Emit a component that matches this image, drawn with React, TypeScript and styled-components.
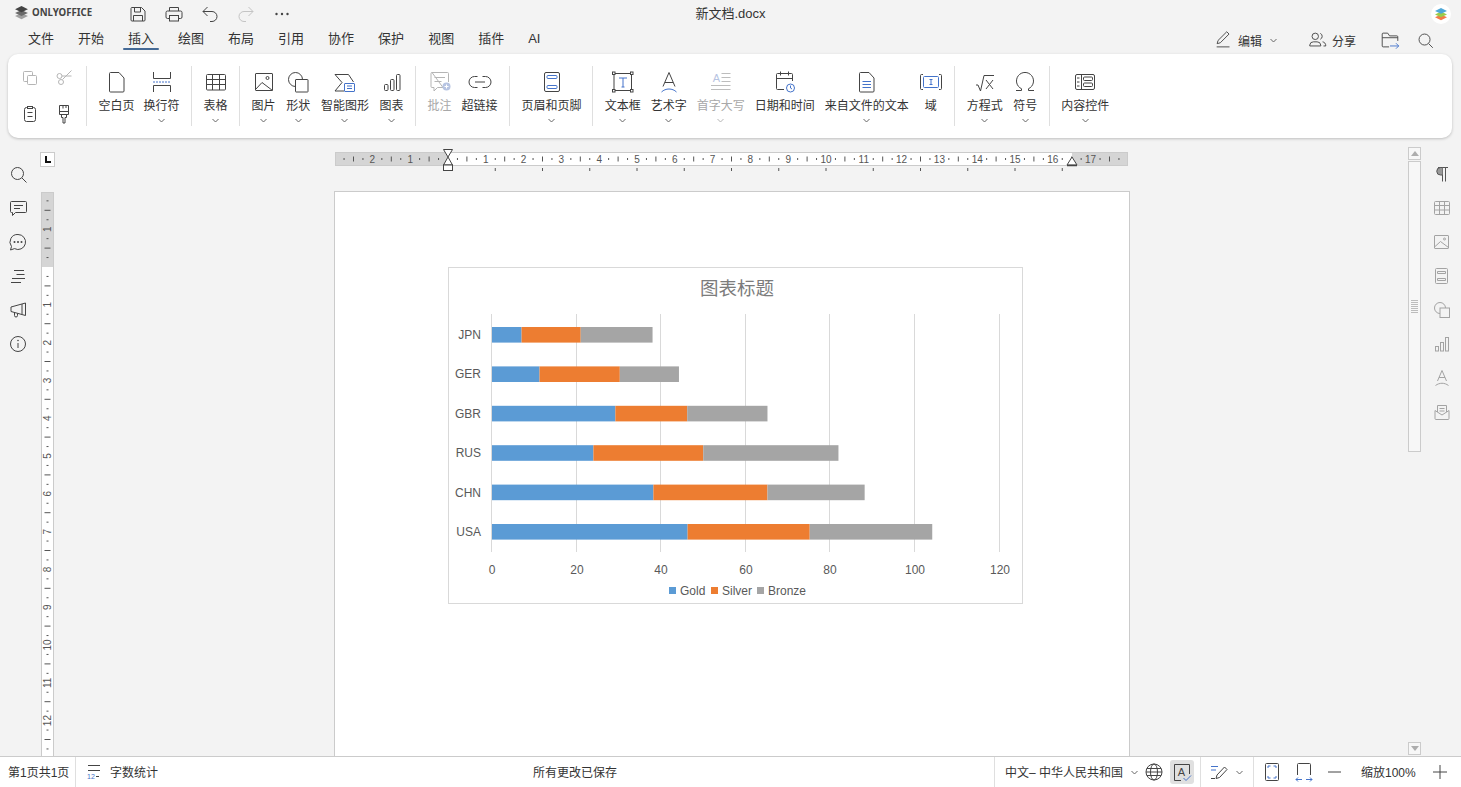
import * as React from "react"
import styled, { createGlobalStyle } from "styled-components"

const COLOR = {
  bg: "#f3f3f3",
  ink: "#444444",
  text: "#333333",
  muted: "#a8a8a8",
  accent: "#4473ca",
  line: "#cbcbcb",
  soft: "#dfdfdf",
}

const GlobalStyle = createGlobalStyle`
  html, body, #root {
    margin: 0;
    height: 100%;
  }
  body {
    background: ${COLOR.bg};
    color: ${COLOR.text};
    font-family: "Liberation Sans", "Noto Sans CJK SC", sans-serif;
    overflow: hidden;
  }
`

const Shell = styled.div`
  display: flex;
  flex-direction: column;
  width: 100%;
  height: 100vh;
  overflow: hidden;
`

/* ---------- icons ---------- */

const Svg = styled.svg<{ $tone?: string }>`
  display: block;
  flex: none;
  fill: none;
  stroke: ${p => p.$tone || COLOR.ink};
  stroke-width: 1;
  color: ${p => p.$tone || COLOR.ink};
`

const Blue: React.FC<{ children: React.ReactNode }> = ({ children }) => <g stroke={COLOR.accent}>{children}</g>

const IconText: React.FC<{ x: number; y: number; size: number; fill?: string; children: React.ReactNode }> = ({
  x,
  y,
  size,
  fill,
  children,
}) => (
  <text
    x={x}
    y={y}
    fontSize={size}
    fontFamily="'Liberation Sans', sans-serif"
    textAnchor="middle"
    fill={fill || "currentColor"}
    stroke="none"
  >
    {children}
  </text>
)

const GLYPHS: Record<string, React.ReactNode> = {
  save: (
    <>
      <path d="M5.5 5.5h10l3.5 3.5v9a1 1 0 0 1-1 1h-12a1 1 0 0 1-1-1v-11.5a1 1 0 0 1 .5-1z" />
      <path d="M8.5 5.5V10h6V5.5M7.5 19v-5.5h9V19" />
    </>
  ),
  print: (
    <>
      <path d="M7.5 9V5.5h9V9" />
      <path d="M7.5 16.5h-2A1.5 1.5 0 0 1 4 15v-4.5A1.5 1.5 0 0 1 5.5 9h13a1.5 1.5 0 0 1 1.5 1.5V15a1.5 1.5 0 0 1-1.5 1.5h-2" />
      <rect x="7.5" y="13.5" width="9" height="5.5" />
    </>
  ),
  undo: <path d="M9.5 5L5 9.5 9.5 14M5 9.5h9a5 5 0 0 1 0 10h-2" />,
  redo: <path d="M14.5 5L19 9.5 14.5 14M19 9.5h-9a5 5 0 0 0 0 10h2" />,
  more: (
    <g fill="currentColor" stroke="none">
      <circle cx="6.5" cy="12" r="1.2" />
      <circle cx="12" cy="12" r="1.2" />
      <circle cx="17.5" cy="12" r="1.2" />
    </g>
  ),
  copy: (
    <>
      <path d="M9 15.5H6.5a1 1 0 0 1-1-1v-8a1 1 0 0 1 1-1h7a1 1 0 0 1 1 1V9" />
      <rect x="9.5" y="9.5" width="9" height="9" rx="1" />
    </>
  ),
  cut: (
    <>
      <circle cx="7.5" cy="10" r="2.5" />
      <circle cx="9" cy="16" r="2.5" />
      <path d="M10.5 13.5L19.5 4.5M10 10h9.5" />
    </>
  ),
  paste: (
    <>
      <rect x="6.5" y="5.5" width="11" height="14" rx="2" />
      <rect x="9.5" y="4.5" width="5" height="2" fill="#fff" />
      <path d="M9.5 10.5h5M9.5 14.5h5" />
    </>
  ),
  brush: (
    <>
      <path d="M7.5 3.5h9v9h-9zM11 3.5v3M14 3.5V6M7.5 9.5h9" />
      <path d="M9.5 12.5v3H11V21h2v-5.5h1.5v-3" />
    </>
  ),
  page: <path d="M4.5 3.5a1 1 0 0 1 1-1H14l5 5.5v13a1 1 0 0 1-1 1H5.5a1 1 0 0 1-1-1z" />,
  breaks: (
    <>
      <path d="M3.5 2v6.5h17V2M3.5 22v-6.5h17V22" />
      <Blue>
        <path d="M3 12h18" strokeDasharray="2 1" />
      </Blue>
    </>
  ),
  table: (
    <>
      <rect x="2.5" y="4.5" width="19" height="15.5" rx="1" />
      <path d="M2.5 9.5h19M2.5 14.5h19M8.5 4.5V20M15.5 4.5V20" />
    </>
  ),
  image: (
    <>
      <rect x="3.5" y="3.5" width="17" height="17" rx=".5" />
      <path d="M3.5 19.5l6.5-7 10.5 8" />
      <circle cx="15.5" cy="8" r="1.5" />
    </>
  ),
  shape: (
    <>
      <circle cx="9.5" cy="9.5" r="7" />
      <rect x="9.5" y="9.5" width="12.5" height="12.5" rx=".5" fill="#fff" />
    </>
  ),
  smart: (
    <>
      <path d="M2 4.5h13.5l5 7.5M2 4.5l7 8-7 8.5h9" />
      <Blue>
        <rect x="11.5" y="13.5" width="10" height="8" rx=".5" fill="#fff" />
        <path d="M14 16h5M14 18.5h5" />
      </Blue>
    </>
  ),
  chart: (
    <>
      <rect x="4.5" y="14.5" width="3.5" height="6" rx="1" />
      <rect x="10.5" y="9.5" width="3.5" height="11" rx="1" />
      <rect x="16.5" y="4.5" width="3.5" height="16" rx="1" />
    </>
  ),
  comment: (
    <>
      <path d="M4 2.5h15.5a1 1 0 0 1 1 1V12M15 17.5H9.5L6 21v-3.5H4a1 1 0 0 1-1-1v-13a1 1 0 0 1 1-1z" />
      <path d="M6.5 7.5H17M6.5 11.5h7" />
      <circle cx="18.5" cy="16.5" r="4" fill="#b7c4e2" stroke="none" />
      <path d="M16.5 16.5h4M18.5 14.5v4" stroke="#fff" />
    </>
  ),
  link: <path d="M9.5 6.5h-3a5.5 5.5 0 0 0 0 11h3M14.5 6.5h3a5.5 5.5 0 0 1 0 11h-3M7 12h10" />,
  header: (
    <>
      <rect x="4.5" y="2.5" width="15" height="19" rx="1.5" />
      <Blue>
        <rect x="7" y="5.5" width="10" height="3" rx="1" />
        <rect x="7" y="15.5" width="10" height="3" rx="1" />
      </Blue>
    </>
  ),
  textbox: (
    <>
      <rect x="3" y="3.5" width="17.5" height="17" />
      <g fill="#fff">
        <rect x="1.5" y="2" width="2.5" height="2.5" />
        <rect x="19.5" y="2" width="2.5" height="2.5" />
        <rect x="1.5" y="19.5" width="2.5" height="2.5" />
        <rect x="19.5" y="19.5" width="2.5" height="2.5" />
      </g>
      <Blue>
        <path d="M8 8h8M12 8v9M10.5 17h3" />
      </Blue>
    </>
  ),
  art: (
    <>
      <path d="M6 16.5L12 2.5l6 14M8 12.5h8" />
      <Blue>
        <path d="M4.5 22c4-4 11-4 15 0" />
      </Blue>
    </>
  ),
  dropcap: (
    <>
      <IconText x={7.5} y={11.5} size={11} fill="#b7c4e2">
        A
      </IconText>
      <path d="M12.5 3.5h9M12.5 7.5h9M12.5 11.5h9M2 15.5h19.5M2 19.5h19.5" stroke="#bdbdbd" />
    </>
  ),
  date: (
    <>
      <path d="M11 19.5H4.5a1 1 0 0 1-1-1v-14a1 1 0 0 1 1-1h14a1 1 0 0 1 1 1V11M3.5 8.5h16M7.5 1.5v4M15.5 1.5v4" />
      <Blue>
        <circle cx="17.5" cy="18" r="4" fill="#fff" />
        <path d="M17.5 15.5V18l1.5 1" />
      </Blue>
    </>
  ),
  fromfile: (
    <>
      <path d="M4.5 3.5a1 1 0 0 1 1-1H14l5 5.5v13a1 1 0 0 1-1 1H5.5a1 1 0 0 1-1-1z" />
      <Blue>
        <path d="M7.5 11.5H16M7.5 14.5H16M7.5 17.5H16" />
      </Blue>
    </>
  ),
  field: (
    <>
      <path d="M4 4.5H2.5a1 1 0 0 0-1 1v13a1 1 0 0 0 1 1H4M20 4.5h1.5a1 1 0 0 1 1 1v13a1 1 0 0 1-1 1H20" />
      <Blue>
        <rect x="4.5" y="6.5" width="15" height="11" rx="1" />
        <path d="M10.5 9.5h3M12 9.5v5M10.5 14.5h3" />
      </Blue>
    </>
  ),
  formula: <path d="M3 15h2l2.5 6L11 5.5h10M13 10l7 9M20 10l-7 9" />,
  symbol: <path d="M3 20.5h5.5v-1.8A8.5 8.5 0 1 1 15.5 18.7v1.8H21" />,
  control: (
    <>
      <rect x="2.5" y="4.5" width="19" height="15" rx="1.5" />
      <path d="M8.5 4.5v15M4 8h2.5M4 12h2.5M4 16h2.5" />
      <rect x="10.5" y="7" width="9" height="3.5" rx="1" />
      <rect x="10.5" y="13" width="9" height="3.5" rx="1" />
    </>
  ),
  pencil: (
    <>
      <path d="M4.5 16l1-3.5L15 3l2.5 2.5L8 15z" />
      <path d="M4 19.5h14" />
    </>
  ),
  users: (
    <>
      <circle cx="9" cy="8" r="3.5" />
      <path d="M3 18.5v-1A4 4 0 0 1 7 14h4a4 4 0 0 1 4 3.5v1zM14.5 4.8a3.5 3.5 0 0 1 0 6.4M17 14c2 .3 3.5 1.8 3.5 4.5H18" />
    </>
  ),
  folder: (
    <>
      <path d="M11 19.5H4.5a1 1 0 0 1-1-1v-13a1 1 0 0 1 1-1h5l2 3h8a1 1 0 0 1 1 1V13M3.5 9.5h17" />
      <Blue>
        <path d="M12 18.5h9.5M18.5 15.5l3 3-3 3" />
      </Blue>
    </>
  ),
  search: (
    <>
      <circle cx="11.5" cy="11.5" r="6" />
      <path d="M16 16l4.5 4.5" />
    </>
  ),
  bubble: (
    <>
      <path d="M5.5 5.5h14a1 1 0 0 1 1 1v9a1 1 0 0 1-1 1h-10l-3 3v-3h-1a1 1 0 0 1-1-1v-9a1 1 0 0 1 1-1z" />
      <path d="M8 9.5h9M8 12.5h6" />
    </>
  ),
  chat: (
    <>
      <path d="M12 4.5a7.5 7.5 0 1 1-3.5 14.1L4.5 20l1-3.5A7.5 7.5 0 0 1 12 4.5z" />
      <g fill="currentColor" stroke="none">
        <circle cx="8.5" cy="12" r="1" />
        <circle cx="12" cy="12" r="1" />
        <circle cx="15.5" cy="12" r="1" />
      </g>
    </>
  ),
  headings: <path d="M8 6.5h10M10.5 10.5h8M6 14.5h13M5 18.5h10" />,
  megaphone: (
    <>
      <path d="M19.5 5v12.5L5 13.5V9zM16 6v10.5" />
      <path d="M8.5 14.5v3a1.5 1.5 0 0 0 3 0v-2" />
    </>
  ),
  info: (
    <>
      <circle cx="12" cy="12" r="7.5" />
      <path d="M12 11v5" />
      <circle cx="12" cy="8.5" r=".8" fill="currentColor" stroke="none" />
    </>
  ),
  pilcrow: (
    <>
      <path d="M8 5.5h10M12.5 5.5v14M15.5 5.5v14" />
      <path d="M12.5 5.5h-2a3.75 3.75 0 0 0 0 7.5h2" fill="#999" />
    </>
  ),
  railTable: (
    <>
      <rect x="4.5" y="5.5" width="15" height="13" rx="1" />
      <path d="M4.5 9.5h15M4.5 14h15M9.5 5.5v13M14.5 5.5v13" />
    </>
  ),
  railImage: (
    <>
      <rect x="4.5" y="5.5" width="14" height="13" rx=".5" />
      <path d="M4.5 17l6-5.5 8 6" />
      <circle cx="14.5" cy="9" r="1" />
    </>
  ),
  railHeader: (
    <>
      <rect x="5.5" y="4.5" width="12" height="15" rx="1" />
      <path d="M7.5 7.5h8v2h-8zM7.5 14.5h8v2h-8z" />
    </>
  ),
  railShape: (
    <>
      <circle cx="10" cy="10" r="5.5" />
      <rect x="10" y="10" width="9.5" height="9.5" fill="#f3f3f3" />
    </>
  ),
  railChart: (
    <>
      <rect x="5.5" y="14.5" width="3" height="4.5" />
      <rect x="10.5" y="10.5" width="3" height="8.5" />
      <rect x="15.5" y="5.5" width="3" height="13.5" />
    </>
  ),
  railArt: (
    <>
      <path d="M7.5 15L12 4.5 16.5 15M9 11.5h6" />
      <path d="M5.5 19.5c4-3 9-3 13 0" />
    </>
  ),
  railMail: (
    <>
      <path d="M5 10.5v8a1 1 0 0 0 1 1h12a1 1 0 0 0 1-1v-8L12 15z" />
      <path d="M7.5 12V5.5h9V12M9.5 8.5h5M9.5 11h5" />
    </>
  ),
  wordcount: (
    <>
      <path d="M6 5.5h12M6 10.5h12" />
      <IconText x={9} y={19} size={7} fill={COLOR.accent}>
        12
      </IconText>
      <path d="M14 16.5h3" />
    </>
  ),
  globe: (
    <>
      <circle cx="12" cy="12" r="8" />
      <ellipse cx="12" cy="12" rx="3.5" ry="8" />
      <path d="M4 12h16M5 8.5h14M5 15.5h14" />
    </>
  ),
  spell: (
    <>
      <path d="M11 20.5H4.5v-16h15V14" />
      <IconText x={11.5} y={16} size={11}>
        A
      </IconText>
      <Blue>
        <path d="M13.5 18l2.5 2.5 5-5" />
      </Blue>
    </>
  ),
  track: (
    <>
      <Blue>
        <path d="M4 6.5h7M4 10h5" />
      </Blue>
      <path d="M9 18.5l1-3.5 7.5-8 2.5 2.5-7.5 8zM4 18.5h4" />
    </>
  ),
  fitPage: (
    <>
      <rect x="5.5" y="3.5" width="13" height="17" rx="1" />
      <Blue>
        <path d="M8 8V6h2.5M13.5 6H16v2M8 16v2h2.5M13.5 18H16v-2" />
      </Blue>
    </>
  ),
  fitWidth: (
    <>
      <path d="M5.5 15V4.5a1 1 0 0 1 1-1h11a1 1 0 0 1 1 1V15" />
      <Blue>
        <path d="M4 19.5h6M14 19.5h6M6 17.5l-2 2 2 2M18 17.5l2 2-2 2" />
      </Blue>
    </>
  ),
  minus: <path d="M5 12h13" />,
  plus: <path d="M5 12h14M12 5v14" />,
}

const Glyph: React.FC<{ name: string; tone?: string; size?: number }> = ({ name, tone, size = 24 }) => (
  <Svg $tone={tone} width={size} height={size} viewBox="0 0 24 24">
    {GLYPHS[name]}
  </Svg>
)

const Chevron: React.FC<{ tone?: string }> = ({ tone }) => (
  <Svg $tone={tone || "#666"} width={7} height={5} viewBox="0 0 7 5">
    <path d="M.5 1L3.5 4 6.5 1" />
  </Svg>
)

/* ---------- title bar ---------- */

const TitleBar = styled.header`
  display: grid;
  grid-template-columns: 1fr auto 1fr;
  align-items: center;
  height: 26px;
  flex: none;
`

const TitleLeft = styled.div`
  display: flex;
  align-items: center;
  padding-left: 14px;
`

const LogoMark = styled.div`
  display: flex;
  align-items: center;
  gap: 3px;
  width: 106px;
  padding-bottom: 3px;
  font-family: "Noto Sans", "Liberation Sans", sans-serif;
  font-size: 9.7px;
  font-weight: 700;
  color: ${COLOR.ink};
`

const QuickButton = styled.div`
  display: flex;
  justify-content: center;
  width: 36px;
`

const DocTitle = styled.div`
  padding-top: 1px;
  font-size: 13px;
  line-height: 26px;
  color: ${COLOR.text};
`

const TitleRight = styled.div`
  display: flex;
  justify-content: flex-end;
  padding-right: 10px;
`

const AppBadge = styled.div`
  display: flex;
  align-items: center;
  justify-content: center;
  width: 20px;
  height: 20px;
  border-radius: 50%;
  background: #fff;
`

/* ---------- tabs ---------- */

const TabRow = styled.nav`
  display: flex;
  align-items: center;
  height: 26px;
  flex: none;
  padding: 0 25px 0 16px;
`

const Tab = styled.div<{ $active?: boolean }>`
  position: relative;
  padding: 0 12px;
  font-size: 13px;
  line-height: 26px;
  color: ${COLOR.text};

  &::after {
    content: "";
    display: ${p => (p.$active ? "block" : "none")};
    position: absolute;
    left: 7px;
    right: 7px;
    bottom: 2px;
    height: 2.5px;
    border-radius: 1px;
    background: #446995;
  }
`

const TabActions = styled.div`
  display: flex;
  align-items: center;
  margin-left: auto;
  padding-top: 2px;
`

const ActionButton = styled.div<{ $gap?: number }>`
  display: flex;
  align-items: center;
  gap: 3px;
  margin-left: ${p => p.$gap || 0}px;
  font-size: 12px;
  color: ${COLOR.text};
`

const ActionLabel = styled.span`
  margin-right: 5.5px;
`

/* ---------- ribbon ---------- */

const Ribbon = styled.section`
  display: flex;
  align-items: flex-start;
  flex: none;
  height: 84px;
  box-sizing: border-box;
  margin: 2px 9px 0 8px;
  padding: 12px 0 0 5px;
  border-radius: 10px;
  background: #fff;
  box-shadow: 0 1px 3px rgba(0, 0, 0, 0.22);
`

const ClipboardGrid = styled.div`
  display: grid;
  grid-template-columns: 34px 34px;
  grid-auto-rows: 24px;
  row-gap: 12px;
  justify-items: center;
  margin-right: -6.5px;
`

const Divider = styled.div`
  flex: none;
  width: 1px;
  height: 60px;
  margin: 0 11.5px;
  background: ${COLOR.soft};
`

const Group = styled.div<{ $gap: number; $trim?: number }>`
  display: flex;
  gap: ${p => p.$gap}px;
  margin-right: ${p => -(p.$trim || 0)}px;
`

const Item = styled.div<{ $disabled?: boolean }>`
  display: flex;
  flex-direction: column;
  align-items: center;
  color: ${p => (p.$disabled ? COLOR.muted : COLOR.text)};
`

const ItemIcon = styled.div`
  display: flex;
  align-items: center;
  justify-content: center;
  height: 32px;
`

const ItemLabel = styled.div`
  font-size: 12px;
  line-height: 16px;
  white-space: nowrap;
`

const ItemArrow = styled.div`
  display: flex;
  justify-content: center;
  padding-top: 4px;
`

/* ---------- workspace ---------- */

const Workspace = styled.main`
  display: flex;
  flex: 1;
  min-height: 0;
`

const LeftRail = styled.aside`
  display: flex;
  flex-direction: column;
  flex: none;
  width: 36px;
  padding-top: 19px;
`

const RailSlot = styled.div`
  display: flex;
  align-items: center;
  justify-content: center;
  height: 34px;
`

const VerticalRulerColumn = styled.div`
  display: flex;
  flex-direction: column;
  align-items: center;
  flex: none;
  width: 15px;
  margin-left: 4px;
  padding-top: 14px;
  overflow: hidden;
`

const RulerCorner = styled.div`
  display: flex;
  flex: none;
  box-sizing: border-box;
  width: 15px;
  height: 15px;
  margin-bottom: 25px;
  padding: 3px 3px 3px 4px;
  border: 1px solid ${COLOR.line};
  background: #fff;

  &::before {
    content: "";
    width: 5px;
    height: 5px;
    border-left: 2px solid #111;
    border-bottom: 2px solid #111;
  }
`

const Canvas = styled.div`
  display: flex;
  flex: 1;
  flex-direction: column;
  align-items: center;
  min-width: 0;
  padding: 11px 0 0 1px;
  overflow: hidden;
`

const Page = styled.div`
  flex: 1;
  box-sizing: border-box;
  width: 796px;
  margin-top: 20px;
  padding: 75px 0 0 113px;
  border: 1px solid ${COLOR.line};
  border-bottom: 0;
  background: #fff;
`

const ChartFrame = styled.div`
  box-sizing: border-box;
  width: 575px;
  height: 337px;
  border: 1px solid #d9d9d9;
`

const ChartSvg = styled.svg`
  display: block;
  margin: -1px;
  font-family: "Liberation Sans", sans-serif;
`

const ScrollColumn = styled.div`
  display: flex;
  flex-direction: column;
  flex: none;
  width: 13px;
  padding: 9px 0 1px;
`

const ScrollButton = styled.div`
  display: flex;
  align-items: center;
  justify-content: center;
  box-sizing: border-box;
  height: 13px;
  border: 1px solid ${COLOR.line};
  background: #f7f7f7;
`

const ScrollArrow = styled.div<{ $down?: boolean }>`
  width: 0;
  height: 0;
  border-left: 4px solid transparent;
  border-right: 4px solid transparent;
  ${p => (p.$down ? "border-top: 5px solid #adadad;" : "border-bottom: 5px solid #adadad;")}
`

const ScrollThumb = styled.div`
  display: flex;
  align-items: center;
  justify-content: center;
  box-sizing: border-box;
  height: 291px;
  margin-top: 1px;
  border: 1px solid ${COLOR.line};
  background: #f7f7f7;
`

const ThumbGrip = styled.div`
  width: 7px;
  height: 14px;
  background: repeating-linear-gradient(#bcbcbc 0 1px, transparent 1px 2px);
`

const ScrollSpacer = styled.div`
  flex: 1;
`

const RightRail = styled.aside`
  display: flex;
  flex-direction: column;
  flex: none;
  width: 40px;
  padding: 19px 0 0 2px;
  box-sizing: border-box;
`

/* ---------- status bar ---------- */

const StatusBar = styled.footer`
  display: flex;
  align-items: center;
  flex: none;
  height: 31px;
  box-sizing: border-box;
  border-top: 1px solid ${COLOR.line};
  background: #fff;
  font-size: 12px;
  line-height: 16px;
  color: ${COLOR.text};
`

const StatusText = styled.span`
  padding-top: 2px;
  white-space: nowrap;
`

const PageCount = styled.div`
  display: flex;
  align-items: center;
  align-self: stretch;
  box-sizing: border-box;
  width: 76px;
  padding-left: 8px;
  border-right: 1px solid ${COLOR.soft};
`

const WordCount = styled.div`
  display: flex;
  align-items: center;
  gap: 4px;
  width: 457px;
  padding-left: 6px;
  box-sizing: border-box;
`

const StatusRight = styled.div`
  display: flex;
  align-items: center;
  align-self: stretch;
  margin-left: auto;
`

const StatusSection = styled.div<{ $width: number }>`
  display: flex;
  align-items: center;
  align-self: stretch;
  box-sizing: border-box;
  width: ${p => p.$width}px;
  border-left: 1px solid ${COLOR.soft};
`

const LangLabel = styled(StatusText)`
  margin-left: 10px;
  width: 119px;
`

const StatusButton = styled.div<{ $active?: boolean; $width?: number; $gap?: number }>`
  display: flex;
  flex: none;
  align-items: center;
  justify-content: center;
  width: ${p => p.$width || 24}px;
  height: 24px;
  margin-left: ${p => p.$gap || 0}px;
  border-radius: 3px;
  background: ${p => (p.$active ? "#e0e0e0" : "transparent")};
`

const ZoomLabel = styled(StatusText)`
  box-sizing: border-box;
  width: 75px;
  padding-left: 9px;
`

/* ---------- rulers ---------- */

const PX_PER_CM = 37.8

const HorizontalRuler: React.FC = () => {
  const zero = 114
  const ticks: React.ReactNode[] = []
  for (let k = -11; k <= 71; k++) {
    const x = zero + (k * PX_PER_CM) / 4
    if (k === 0) continue
    if (k % 4 === 0) {
      ticks.push(
        <text key={k} x={x} y={13.5} fontSize="10" textAnchor="middle" fill="#555" stroke="none">
          {Math.abs(k / 4)}
        </text>,
      )
    } else {
      const h = k % 2 === 0 ? 5 : 2
      ticks.push(<line key={k} x1={x} x2={x} y1={10 - h / 2} y2={10 + h / 2} stroke="#555" />)
    }
  }
  const stops = Array.from({ length: 13 }, (_, i) => zero + (i + 1) * 47.25)
  return (
    <Svg width={796} height={22} viewBox="0 0 796 22" style={{ fontFamily: "Liberation Sans, sans-serif" }}>
      <rect x="1.5" y="3.5" width="792" height="13" fill="#fff" stroke={COLOR.line} />
      <rect x="2" y="4" width={zero - 2} height="12" fill="#d5d5d5" stroke="none" />
      <rect x="738" y="4" width="55" height="12" fill="#d5d5d5" stroke="none" />
      {ticks}
      {stops.map(x => (
        <line key={x} x1={x} x2={x} y1={19} y2={22} stroke="#555" />
      ))}
      <path d="M109.5 .5h9L114 8zM114 8l4.5 8h-9z" fill="#fff" stroke="#444" />
      <rect x="109.5" y="16" width="9" height="5.5" fill="#fff" stroke="#444" />
      <path d="M738 8l5 8h-10z" fill="#fff" stroke="#444" />
      <path d="M733 16.5h10" stroke="#444" strokeWidth="1.5" />
    </Svg>
  )
}

const VerticalRuler: React.FC = () => {
  const zero = 75
  const ticks: React.ReactNode[] = []
  for (let k = -7; k <= 51; k++) {
    const y = zero + (k * PX_PER_CM) / 4
    if (k === 0) continue
    if (k % 4 === 0) {
      ticks.push(
        <text
          key={k}
          x={6.5}
          y={y + 3.5}
          fontSize="10"
          textAnchor="middle"
          fill="#555"
          stroke="none"
          transform={`rotate(-90 6.5 ${y})`}
        >
          {Math.abs(k / 4)}
        </text>,
      )
    } else {
      const w = k % 2 === 0 ? 6 : 2
      ticks.push(<line key={k} x1={6.5 - w / 2} x2={6.5 + w / 2} y1={y} y2={y} stroke="#555" />)
    }
  }
  return (
    <Svg width={13} height={564} viewBox="0 0 13 564" style={{ fontFamily: "Liberation Sans, sans-serif" }}>
      <rect x=".5" y=".5" width="12" height="570" fill="#fff" stroke={COLOR.line} />
      <rect x="1" y="1" width="11" height={zero - 1} fill="#d5d5d5" stroke="none" />
      {ticks}
    </Svg>
  )
}

/* ---------- chart ---------- */

const MEDALS = [
  { code: "JPN", values: [7, 14, 17] },
  { code: "GER", values: [11.25, 19, 14] },
  { code: "GBR", values: [29.2, 17, 19] },
  { code: "RUS", values: [24, 26, 32] },
  { code: "CHN", values: [38.2, 27, 23] },
  { code: "USA", values: [46.3, 28.9, 29] },
]

const SERIES = [
  { name: "Gold", color: "#5b9bd5", swatch: 221, label: 232 },
  { name: "Silver", color: "#ed7d31", swatch: 263, label: 274 },
  { name: "Bronze", color: "#a5a5a5", swatch: 309, label: 320 },
]

const MedalChart: React.FC = () => {
  const x0 = 44
  const unit = 4.225
  return (
    <ChartSvg width={575} height={337} viewBox="0 0 575 337">
      <text x={289} y={27.5} fontSize="18.5" textAnchor="middle" fill="#7c7c7c" fontFamily="'Noto Sans CJK SC', sans-serif">
        图表标题
      </text>
      {[0, 20, 40, 60, 80, 100, 120].map(v => {
        const x = Math.round(x0 + v * 4.23) - 0.5
        return (
          <g key={v}>
            <line x1={x} x2={x} y1={47} y2={285} stroke="#d9d9d9" />
            <text x={x + 0.5} y={306.5} fontSize="12" textAnchor="middle" fill="#595959">
              {v}
            </text>
          </g>
        )
      })}
      {MEDALS.map((row, i) => {
        const y = 60 + i * 39.4
        let left = x0
        return (
          <g key={row.code}>
            <text x={33} y={y + 12} fontSize="12" textAnchor="end" fill="#595959">
              {row.code}
            </text>
            {row.values.map((v, s) => {
              const width = v * unit
              const bar = <rect key={s} x={left} y={y} width={width} height={15.6} fill={SERIES[s].color} />
              left += width
              return bar
            })}
          </g>
        )
      })}
      {SERIES.map(s => (
        <g key={s.name}>
          <rect x={s.swatch} y={320} width={7} height={7} fill={s.color} />
          <text x={s.label} y={328} fontSize="12" fill="#595959">
            {s.name}
          </text>
        </g>
      ))}
    </ChartSvg>
  )
}

/* ---------- data ---------- */

const TABS = ["文件", "开始", "插入", "绘图", "布局", "引用", "协作", "保护", "视图", "插件", "AI"]

type RibbonItem = { icon: string; label: string; arrow?: boolean; disabled?: boolean }
type RibbonGroup = { gap: number; trim?: number; items: RibbonItem[] }

const RIBBON: RibbonGroup[] = [
  {
    gap: 9,
    items: [
      { icon: "page", label: "空白页" },
      { icon: "breaks", label: "换行符", arrow: true },
    ],
  },
  { gap: 0, items: [{ icon: "table", label: "表格", arrow: true }] },
  {
    gap: 10.67,
    items: [
      { icon: "image", label: "图片", arrow: true },
      { icon: "shape", label: "形状", arrow: true },
      { icon: "smart", label: "智能图形", arrow: true },
      { icon: "chart", label: "图表", arrow: true },
    ],
  },
  {
    gap: 10,
    items: [
      { icon: "comment", label: "批注", disabled: true },
      { icon: "link", label: "超链接" },
    ],
  },
  { gap: 0, trim: 1, items: [{ icon: "header", label: "页眉和页脚", arrow: true }] },
  {
    gap: 10,
    items: [
      { icon: "textbox", label: "文本框", arrow: true },
      { icon: "art", label: "艺术字", arrow: true },
      { icon: "dropcap", label: "首字大写", arrow: true, disabled: true },
      { icon: "date", label: "日期和时间" },
      { icon: "fromfile", label: "来自文件的文本", arrow: true },
      { icon: "field", label: "域" },
    ],
  },
  {
    gap: 10.5,
    items: [
      { icon: "formula", label: "方程式", arrow: true },
      { icon: "symbol", label: "符号", arrow: true },
    ],
  },
  { gap: 0, items: [{ icon: "control", label: "内容控件", arrow: true }] },
]

const LEFT_RAIL = ["search", "bubble", "chat", "headings", "megaphone", "info"]
const RIGHT_RAIL = ["railTable", "railImage", "railHeader", "railShape", "railChart", "railArt", "railMail"]

const LogoStack: React.FC<{ colors: string[]; size: number }> = ({ colors, size }) => (
  <svg width={size} height={size} viewBox="0 0 14 14">
    <path d="M7 7.5L1 10.3l6 2.9 6-2.9z" fill={colors[2]} />
    <path d="M7 4.6L1 7.4l6 2.9 6-2.9z" fill={colors[1]} />
    <path d="M7 1L1 3.9l6 2.9 6-2.9z" fill={colors[0]} />
  </svg>
)

export default function App() {
  return (
    <Shell>
      <GlobalStyle />
      <TitleBar>
        <TitleLeft>
          <LogoMark>
            <LogoStack size={15} colors={["#444", "#6b6b6b", "#a0a0a0"]} />
            ONLYOFFICE
          </LogoMark>
          <QuickButton>
            <Glyph name="save" />
          </QuickButton>
          <QuickButton>
            <Glyph name="print" />
          </QuickButton>
          <QuickButton>
            <Glyph name="undo" />
          </QuickButton>
          <QuickButton>
            <Glyph name="redo" tone="#c4c4c4" />
          </QuickButton>
          <QuickButton>
            <Glyph name="more" />
          </QuickButton>
        </TitleLeft>
        <DocTitle>新文档.docx</DocTitle>
        <TitleRight>
          <AppBadge>
            <LogoStack size={14} colors={["#4fa8d8", "#9ccb4a", "#f47b4a"]} />
          </AppBadge>
        </TitleRight>
      </TitleBar>

      <TabRow>
        {TABS.map(tab => (
          <Tab key={tab} $active={tab === "插入"}>
            {tab}
          </Tab>
        ))}
        <TabActions>
          <ActionButton>
            <Glyph name="pencil" size={22} />
            <ActionLabel>编辑</ActionLabel>
            <Chevron />
          </ActionButton>
          <ActionButton $gap={29.5}>
            <Glyph name="users" size={22} />
            <span>分享</span>
          </ActionButton>
          <ActionButton $gap={23}>
            <Glyph name="folder" size={22} />
          </ActionButton>
          <ActionButton $gap={13}>
            <Glyph name="search" size={22} />
          </ActionButton>
        </TabActions>
      </TabRow>

      <Ribbon>
        <ClipboardGrid>
          <Glyph name="copy" tone="#b5b5b5" />
          <Glyph name="cut" tone="#b5b5b5" />
          <Glyph name="paste" />
          <Glyph name="brush" />
        </ClipboardGrid>
        {RIBBON.map((group, g) => (
          <React.Fragment key={g}>
            <Divider />
            <Group $gap={group.gap} $trim={group.trim}>
              {group.items.map(item => (
                <Item key={item.label} $disabled={item.disabled}>
                  <ItemIcon>
                    <Glyph name={item.icon} tone={item.disabled ? "#b5b5b5" : undefined} />
                  </ItemIcon>
                  <ItemLabel>{item.label}</ItemLabel>
                  {item.arrow && (
                    <ItemArrow>
                      <Chevron tone={item.disabled ? "#b5b5b5" : undefined} />
                    </ItemArrow>
                  )}
                </Item>
              ))}
            </Group>
          </React.Fragment>
        ))}
      </Ribbon>

      <Workspace>
        <LeftRail>
          {LEFT_RAIL.map(name => (
            <RailSlot key={name}>
              <Glyph name={name} />
            </RailSlot>
          ))}
        </LeftRail>
        <VerticalRulerColumn>
          <RulerCorner />
          <VerticalRuler />
        </VerticalRulerColumn>
        <Canvas>
          <HorizontalRuler />
          <Page>
            <ChartFrame>
              <MedalChart />
            </ChartFrame>
          </Page>
        </Canvas>
        <ScrollColumn>
          <ScrollButton>
            <ScrollArrow />
          </ScrollButton>
          <ScrollThumb>
            <ThumbGrip />
          </ScrollThumb>
          <ScrollSpacer />
          <ScrollButton>
            <ScrollArrow $down />
          </ScrollButton>
        </ScrollColumn>
        <RightRail>
          <RailSlot>
            <Glyph name="pilcrow" tone="#555" />
          </RailSlot>
          {RIGHT_RAIL.map(name => (
            <RailSlot key={name}>
              <Glyph name={name} tone="#a3a3a3" />
            </RailSlot>
          ))}
        </RightRail>
      </Workspace>

      <StatusBar>
        <PageCount>
          <StatusText>第1页共1页</StatusText>
        </PageCount>
        <WordCount>
          <Glyph name="wordcount" />
          <StatusText>字数统计</StatusText>
        </WordCount>
        <StatusText>所有更改已保存</StatusText>
        <StatusRight>
          <StatusSection $width={206}>
            <LangLabel>中文– 中华人民共和国</LangLabel>
            <StatusButton $width={20}>
              <Chevron />
            </StatusButton>
            <StatusButton $width={20}>
              <Glyph name="globe" />
            </StatusButton>
            <StatusButton $active $gap={6}>
              <Glyph name="spell" />
            </StatusButton>
          </StatusSection>
          <StatusSection $width={53}>
            <StatusButton $width={35}>
              <Glyph name="track" />
            </StatusButton>
            <Chevron />
          </StatusSection>
          <StatusSection $width={208}>
            <StatusButton $width={36}>
              <Glyph name="fitPage" />
            </StatusButton>
            <StatusButton $width={28}>
              <Glyph name="fitWidth" />
            </StatusButton>
            <StatusButton $width={34}>
              <Glyph name="minus" />
            </StatusButton>
            <ZoomLabel>缩放100%</ZoomLabel>
            <StatusButton $width={26}>
              <Glyph name="plus" />
            </StatusButton>
          </StatusSection>
        </StatusRight>
      </StatusBar>
    </Shell>
  )
}
